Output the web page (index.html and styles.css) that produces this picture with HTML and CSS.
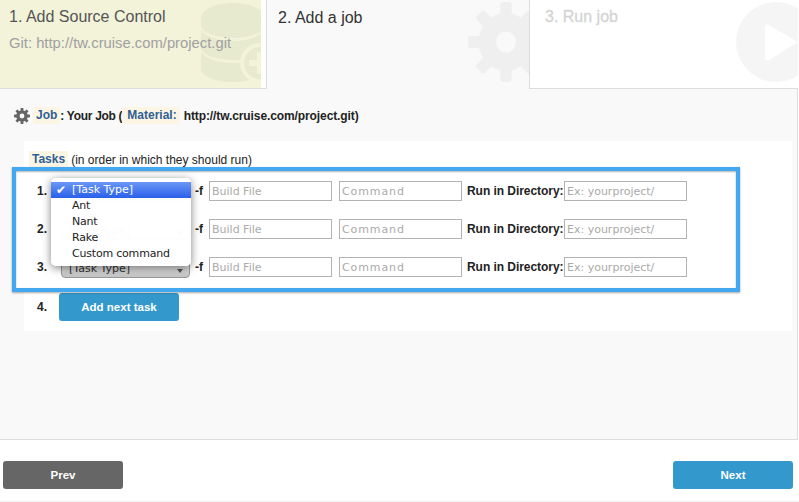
FILE: index.html
```html
<!DOCTYPE html>
<html lang="en">
<head>
<meta charset="utf-8">
<title>Add a job</title>
<link rel="stylesheet" href="styles.css">
</head>
<body>
<header class="tabs">
  <section class="tab tab-done">
    <div class="tab-fill">
      <svg class="tab-icon icon-db" viewBox="0 0 62 80" width="62" height="80">
        <g fill="#e8ead0">
          <path d="M0 15C0 7 14 0 32 0s32 7 32 15v7c0 7-14 13-32 13S0 29 0 22z"/>
          <path d="M0 27c5 7 18 11 32 11s27-4 32-11v17c0 7-14 13-32 13S0 51 0 44z"/>
          <path d="M0 49c5 7 18 11 32 11s27-4 32-11v17c0 7-14 13-32 13S0 73 0 66z"/>
        </g>
        <circle cx="59" cy="60" r="20" fill="#f2f3d9"/>
        <circle cx="59" cy="60" r="16" fill="#e8ead0"/>
        <path d="M56 49h6v8h8v6h-8v8h-6v-8h-8v-6h8z" fill="#f2f3d9"/>
      </svg>
      <h2 class="tab-title">1. Add Source Control</h2>
      <p class="tab-sub">Git: http://tw.cruise.com/project.git</p>
    </div>
  </section>
  <section class="tab tab-current">
    <h2 class="tab-title tab-title-current">2. Add a job</h2>
    <svg class="tab-icon icon-gear" viewBox="-40 -40 80 80" width="76" height="80" preserveAspectRatio="none">
      <g fill="#efefef">
        <circle r="29"/>
        <rect x="-6" y="-40" width="12" height="20" rx="3"/>
        <rect x="-6" y="-40" width="12" height="20" rx="3" transform="rotate(45)"/>
        <rect x="-6" y="-40" width="12" height="20" rx="3" transform="rotate(90)"/>
        <rect x="-6" y="-40" width="12" height="20" rx="3" transform="rotate(135)"/>
        <rect x="-6" y="-40" width="12" height="20" rx="3" transform="rotate(180)"/>
        <rect x="-6" y="-40" width="12" height="20" rx="3" transform="rotate(225)"/>
        <rect x="-6" y="-40" width="12" height="20" rx="3" transform="rotate(270)"/>
        <rect x="-6" y="-40" width="12" height="20" rx="3" transform="rotate(315)"/>
      </g>
      <circle r="10.5" fill="#f9f9f9"/>
    </svg>
  </section>
  <section class="tab tab-next">
    <h2 class="tab-title tab-title-next">3. Run job</h2>
    <svg class="tab-icon icon-play" viewBox="0 0 62 80" width="62" height="80">
      <circle cx="40" cy="40" r="40" fill="#f5f5f5"/>
      <path d="M29 25 Q29 21 33 23 L62 40 L33 58 Q29 60 29 56z" fill="#fff"/>
    </svg>
  </section>
</header>

<main class="content">
  <div class="job-line">
    <svg class="job-gear" viewBox="-40 -40 80 80" width="16" height="16">
      <g fill="#666">
        <circle r="29"/>
        <rect x="-7" y="-40" width="14" height="20" rx="3"/>
        <rect x="-7" y="-40" width="14" height="20" rx="3" transform="rotate(45)"/>
        <rect x="-7" y="-40" width="14" height="20" rx="3" transform="rotate(90)"/>
        <rect x="-7" y="-40" width="14" height="20" rx="3" transform="rotate(135)"/>
        <rect x="-7" y="-40" width="14" height="20" rx="3" transform="rotate(180)"/>
        <rect x="-7" y="-40" width="14" height="20" rx="3" transform="rotate(225)"/>
        <rect x="-7" y="-40" width="14" height="20" rx="3" transform="rotate(270)"/>
        <rect x="-7" y="-40" width="14" height="20" rx="3" transform="rotate(315)"/>
      </g>
      <circle r="12" fill="#f9f9f9"/>
    </svg>
    <span class="key key-job">Job</span><span class="sep">: Your Job (</span><span class="key key-material">Material:</span><span class="url">http://tw.cruise.com/project.git)</span>
  </div>

  <div class="card">
    <div class="tasks-head"><span class="key key-tasks">Tasks</span><span class="tasks-note">(in order in which they should run)</span></div>
    <div class="task-box">
      <div class="task-row">
        <span class="num">1.</span>
        <div class="select"><span>[Task Type]</span><i class="arrow"></i></div>
        <span class="flag">-f</span>
        <input class="field" placeholder="Build File">
        <input class="field field-cmd" placeholder="Command">
        <span class="dir-label">Run in Directory:</span>
        <input class="field" placeholder="Ex: yourproject/">
      </div>
      <div class="task-row">
        <span class="num">2.</span>
        <div class="select"><span>[Task Type]</span><i class="arrow"></i></div>
        <span class="flag">-f</span>
        <input class="field" placeholder="Build File">
        <input class="field field-cmd" placeholder="Command">
        <span class="dir-label">Run in Directory:</span>
        <input class="field" placeholder="Ex: yourproject/">
      </div>
      <div class="task-row">
        <span class="num">3.</span>
        <div class="select"><span>[Task Type]</span><i class="arrow"></i></div>
        <span class="flag">-f</span>
        <input class="field" placeholder="Build File">
        <input class="field field-cmd" placeholder="Command">
        <span class="dir-label">Run in Directory:</span>
        <input class="field" placeholder="Ex: yourproject/">
      </div>
      <ul class="menu">
        <li class="menu-item menu-item-active"><span class="check">✔</span>[Task Type]</li>
        <li class="menu-item">Ant</li>
        <li class="menu-item">Nant</li>
        <li class="menu-item">Rake</li>
        <li class="menu-item">Custom command</li>
      </ul>
    </div>
    <div class="add-row">
      <span class="num num-add">4.</span>
      <button class="btn btn-blue">Add next task</button>
    </div>
  </div>
</main>

<footer class="footer">
  <button class="btn btn-grey">Prev</button>
  <button class="btn btn-blue">Next</button>
</footer>
</body>
</html>
```
FILE: styles.css
```css
* { box-sizing: border-box; }
html, body { margin: 0; padding: 0; }
body {
  width: 799px;
  height: 502px;
  overflow: hidden;
  background: #fff;
  font-family: "Liberation Sans", Arial, sans-serif;
  font-size: 12px;
  color: #222;
}

/* Tabs */
.tabs { display: flex; width: 798px; height: 89px; }
.tab { position: relative; overflow: hidden; height: 89px; }
.tab-done { width: 267px; padding-right: 5px; border-right: 1px solid #ddd; border-bottom: 1px solid #ddd; }
.tab-fill { position: relative; overflow: hidden; height: 88px; background: #f2f3d9; padding: 8px 9px; }
.tab-current { width: 262px; background: #f9f9f9; padding: 9px 11px; }
.tab-next { flex: 1; background: #fff; border-left: 1px solid #ddd; border-bottom: 1px solid #ddd; padding: 8px 15px; }
.tab-title { position: relative; z-index: 1; margin: 0; font-size: 16px; line-height: 18px; font-weight: normal; color: #555; }
.tab-title-current { color: #333; }
.tab-title-next { color: #d4d4d4; -webkit-text-stroke: 0.3px #d4d4d4; }
.tab-sub { position: relative; z-index: 1; margin: 9px 0 0; font-size: 14.8px; line-height: 16px; color: #a0a0a0; }
.tab-icon { position: absolute; display: block; }
.icon-db { left: 201px; top: 3px; }
.icon-gear { right: -15px; top: 2px; }
.icon-play { right: 0; top: 2px; }

/* Content */
.content { width: 798px; height: 351px; background: #f9f9f9; border-right: 1px solid #ddd; border-bottom: 1px solid #ddd; padding-top: 18px; }
.job-line { display: flex; align-items: center; height: 17px; margin-left: 14px; font-weight: bold; color: #222; }
.job-gear { flex: none; margin-right: 3px; }
.key { display: inline-block; height: 17px; line-height: 17px; padding: 0 3px; background: #fdf5e4; color: #2e6096; font-weight: bold; }
.sep { letter-spacing: -0.3px; white-space: pre; }
.key-material { padding-left: 5px; }
.url { margin-left: 4px; letter-spacing: -0.1px; }

.card { width: 768px; height: 190px; margin: 17px 0 0 24px; padding-top: 10px; background: #fff; }
.tasks-head { display: flex; align-items: center; height: 17px; margin-left: 5px; margin-bottom: -1px; }
.tasks-note { margin-left: 3px; }

.task-box { position: relative; width: 728px; height: 125px; margin-left: -12px; padding: 10px 0 0 21px; border: 4px solid #44a8f0; box-shadow: 0 1px 2px rgba(0, 0, 0, 0.35), inset 0 1px 2px rgba(0, 0, 0, 0.3); background: #fff; display: flex; flex-direction: column; gap: 18px; }
.task-row { display: flex; align-items: center; height: 20px; font-weight: bold; }
.num { width: 24px; font-weight: bold; color: #222; }
.select { position: relative; display: flex; align-items: center; width: 129px; height: 18px; margin-top: 3px; padding-left: 7px; border: 1px solid #999; border-radius: 4px; background: linear-gradient(#f2f2f2, #c4c4c4); font-family: "DejaVu Sans", sans-serif; font-size: 11px; font-weight: normal; color: #333; }
.arrow { position: absolute; right: 6px; top: 8px; border: 3px solid transparent; border-top: 4px solid #555; border-bottom: 0; }
.flag { width: 14px; margin-left: 5px; }
.field { width: 123px; height: 20px; padding: 0 3px 0 2px; border: 1px solid #b3b3b3; border-radius: 0; background: #fff; font-family: "DejaVu Sans", sans-serif; font-size: 11px; outline: 0; }
.field::placeholder { color: #aaa; opacity: 1; }
.field-cmd { margin-left: 7px; letter-spacing: 0.9px; }
.dir-label { width: 102px; padding-left: 5px; white-space: nowrap; letter-spacing: -0.05px; }

.menu { position: absolute; left: 35px; top: 7px; width: 140px; height: 88px; margin: 0; padding: 4px 0; list-style: none; background: rgba(255, 255, 255, 0.985); border-radius: 5px; box-shadow: 0 2px 8px rgba(0, 0, 0, 0.5); font-family: "DejaVu Sans", sans-serif; font-size: 11px; letter-spacing: -0.2px; color: #222; }
.menu-item { position: relative; height: 16px; line-height: 16px; padding-left: 21px; white-space: nowrap; }
.menu-item-active { background: linear-gradient(#6a97f6, #2a5fea); color: #fff; letter-spacing: 0; }
.check { position: absolute; left: 5px; top: 0; font-size: 12px; }

.add-row { display: flex; align-items: center; margin: 1px 0 0 13px; }
.num-add { width: 22px; }

/* Buttons */
.btn { width: 120px; height: 28px; padding: 0; border: 0; border-radius: 3px; color: #fff; font-family: "Liberation Sans", Arial, sans-serif; font-size: 11.5px; font-weight: bold; }
.btn-blue { background: #3399cc; }
.btn-grey { background: #666; }

/* Footer */
.footer { display: flex; justify-content: space-between; width: 799px; height: 62px; padding: 21px 6px 0 3px; border-bottom: 1px solid #eee; }
```
